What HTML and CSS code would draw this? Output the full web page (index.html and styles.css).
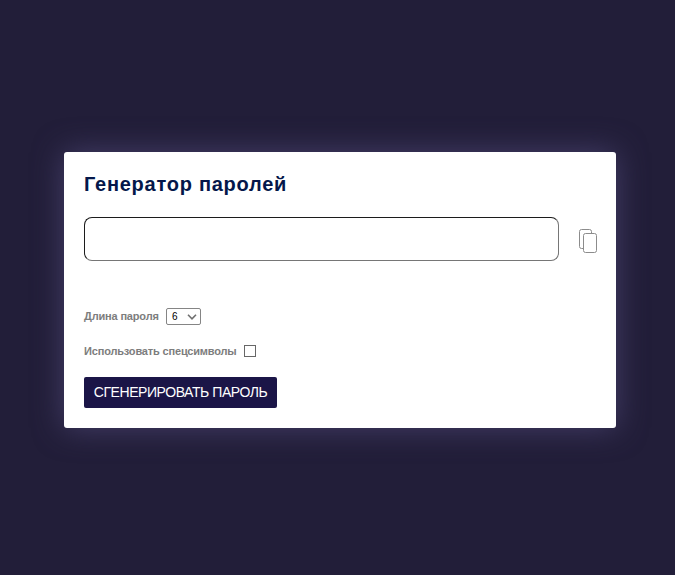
FILE: index.html
```html
<!DOCTYPE html>
<html lang="ru">
<head>
<meta charset="UTF-8">
<title>Генератор паролей</title>
<link rel="stylesheet" href="styles.css">
</head>
<body>
<main class="card">
  <h1 class="title">Генератор паролей</h1>
  <div class="result">
    <input class="password" type="text" readonly>
    <svg class="copy" width="20" height="26" viewBox="0 0 20 26" fill="#fff" stroke="#8c8c8c">
      <rect x="1.5" y="1.5" width="12" height="19" rx="2"/>
      <rect x="5.5" y="5.5" width="13" height="19" rx="2"/>
    </svg>
  </div>
  <div class="row">
    <span class="label length">Длина пароля</span>
    <div class="select"><span>6</span>
      <svg width="10" height="6" viewBox="0 0 10 6" fill="none" stroke="#707070" stroke-width="1.6"><path d="M1 .8l4 4 4-4"/></svg>
    </div>
  </div>
  <div class="row symbols">
    <label class="label special" for="special">Использовать спецсимволы</label>
    <input class="check" id="special" type="checkbox">
  </div>
  <button class="generate"><span>СГЕНЕРИРОВАТЬ ПАРОЛЬ</span></button>
</main>
</body>
</html>
```
FILE: styles.css
```css
* { box-sizing: border-box; }
body {
  margin: 0;
  height: 575px;
  padding: 152px 59px 0 64px;
  background: #221e39;
  font-family: "Liberation Sans", Arial, sans-serif;
}
.card {
  width: 552px;
  height: 276px;
  padding: 20px;
  background: #fff;
  border-radius: 3px;
  box-shadow: 0 0 30px #453f69;
}
.title {
  margin: 0;
  height: 45px;
  font-size: 20px;
  line-height: 24px;
  letter-spacing: .74px;
  color: #04174a;
  white-space: nowrap;
}
.result {
  display: flex;
  align-items: center;
  gap: 19px;
}
.password {
  flex: none;
  width: 475px;
  height: 44px;
  padding: 0 10px;
  border: 1px solid;
  border-color: #1c1c1c #767676 #767676 #1c1c1c;
  border-radius: 8px;
  outline: none;
}
.copy {
  flex: none;
  margin-top: 4px;
}
.row {
  display: flex;
  align-items: center;
  height: 17px;
  margin-top: 47px;
}
.symbols { margin-top: 18px; }
.label {
  font-size: 11px;
  font-weight: 700;
  line-height: 17px;
  letter-spacing: -.17px;
  color: #7d7d7d;
  white-space: nowrap;
}
.length { width: 82px; }
.special { width: 160px; }
.select {
  display: flex;
  align-items: center;
  justify-content: space-between;
  width: 35px;
  height: 17px;
  padding: 0 3px 0 5px;
  border: 1px solid #858585;
  border-radius: 2px;
  font-size: 10px;
  line-height: 15px;
  color: #000;
}
.select span { margin-top: -1px; }
.check {
  appearance: none;
  width: 12px;
  height: 12px;
  margin: 0 0 2px;
  border: 1px solid #676767;
}
.generate {
  display: block;
  width: 193px;
  height: 31px;
  margin-top: 17px;
  padding: 0;
  border: 0;
  border-radius: 2px;
  background: #1b1547;
  color: #fff;
  font: 14px/31px "Liberation Sans", Arial, sans-serif;
  letter-spacing: -.43px;
  white-space: nowrap;
}
```
